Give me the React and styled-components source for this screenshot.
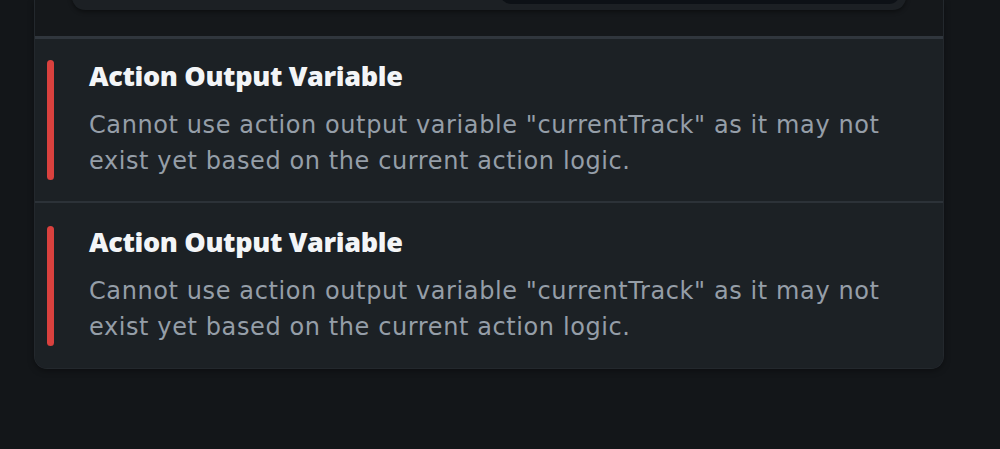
import React from "react";
import styled, { createGlobalStyle } from "styled-components";

const Global = createGlobalStyle`
  html, body { margin: 0; padding: 0; background: #131619; }
  body { font-family: "DejaVu Sans", "Noto Sans", sans-serif; }
`;

const Page = styled.div`
  width: 1000px;
  height: 449px;
  background: #131619;
  padding-left: 34px;
  box-sizing: border-box;
  overflow: hidden;
`;

const Panel = styled.div`
  width: 910px;
  box-sizing: border-box;
  border: 1px solid #23282d;
  border-top: none;
  border-radius: 0 0 13px 13px;
  overflow: hidden;
  background: #1c2125;
  box-shadow: 0 2px 6px rgba(0, 0, 0, 0.35);
`;

const TopSection = styled.div`
  height: 36px;
  background: #15181b;
  padding: 0 37px;
  overflow: hidden;
  border-bottom: 3px solid #30363d;
`;

const Card = styled.div`
  height: 60px;
  margin-top: -50px;
  background: #1c2024;
  border-radius: 0 0 13px 13px;
  box-shadow: 0 2px 4px rgba(0, 0, 0, 0.4);
  display: flex;
  justify-content: flex-end;
  padding-right: 6px;
`;

const Input = styled.div`
  width: 400px;
  height: 54px;
  background: #0d1116;
  border-radius: 0 0 11px 11px;
`;

const Row = styled.div`
  display: flex;
  gap: 35px;
  padding: ${(p) => (p.$first ? "21px 12px 21px" : "23px 12px 22px")};
  background: #1c2125;
  border-top: ${(p) => (p.$first ? "none" : "2px solid #2c3238")};
`;

const Bar = styled.div`
  width: 7px;
  flex: none;
  border-radius: 4px;
  background: #d9413e;
`;

const Text = styled.div`
  height: 120px;
  display: flex;
  flex-direction: column;
`;

const Title = styled.div`
  font-family: "Open Sans", "Noto Sans", sans-serif;
  font-size: 27px;
  line-height: 32px;
  font-weight: 800;
  color: #f3f5f7;
  letter-spacing: -0.35px;
  margin-bottom: 15px;
`;

const Body = styled.div`
  font-size: 24px;
  line-height: 36px;
  color: #959ea8;
  letter-spacing: 0.6px;
  width: 840px;
  white-space: nowrap;
`;

const items = [1, 2];

export default function App() {
  return (
    <>
      <Global />
      <Page>
        <Panel>
          <TopSection>
            <Card>
              <Input />
            </Card>
          </TopSection>
          {items.map((i, idx) => (
            <Row key={i} $first={idx === 0}>
              <Bar />
              <Text>
                <Title>Action Output Variable</Title>
                <Body>
                  Cannot use action output variable "currentTrack" as it may not
                  <br />
                  exist yet based on the current action logic.
                </Body>
              </Text>
            </Row>
          ))}
        </Panel>
      </Page>
    </>
  );
}
